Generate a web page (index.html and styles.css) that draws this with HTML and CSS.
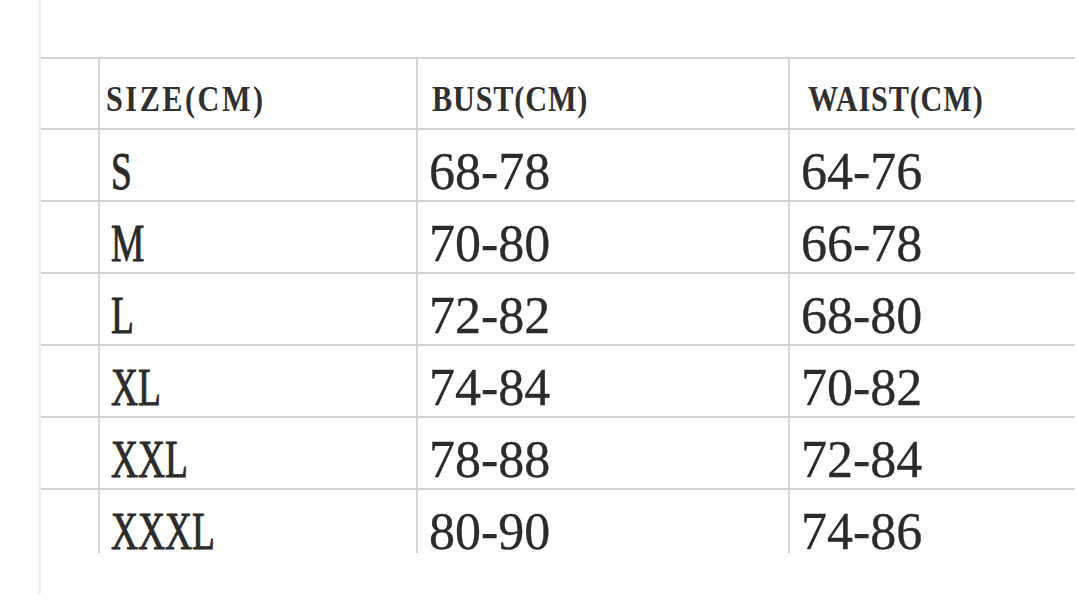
FILE: index.html
```html
<!DOCTYPE html>
<html lang="en">
<head>
<meta charset="utf-8">
<title>Size chart</title>
<link rel="stylesheet" href="styles.css">
</head>
<body>
<div class="sheet">
  <div class="grid">
    <div class="cell head idx"></div>
    <div class="cell head c1"><span class="ht wide">SIZE(CM)</span></div>
    <div class="cell head c2"><span class="ht">BUST(CM)</span></div>
    <div class="cell head c3"><span class="ht">WAIST(CM)</span></div>

    <div class="cell idx"></div>
    <div class="cell c1"><span class="sz">S</span></div>
    <div class="cell c2">68-78</div>
    <div class="cell c3">64-76</div>

    <div class="cell idx"></div>
    <div class="cell c1"><span class="sz">M</span></div>
    <div class="cell c2">70-80</div>
    <div class="cell c3">66-78</div>

    <div class="cell idx"></div>
    <div class="cell c1"><span class="sz">L</span></div>
    <div class="cell c2">72-82</div>
    <div class="cell c3">68-80</div>

    <div class="cell idx"></div>
    <div class="cell c1"><span class="sz">XL</span></div>
    <div class="cell c2">74-84</div>
    <div class="cell c3">70-82</div>

    <div class="cell idx"></div>
    <div class="cell c1"><span class="sz">XXL</span></div>
    <div class="cell c2">78-88</div>
    <div class="cell c3">72-84</div>

    <div class="cell idx last"></div>
    <div class="cell c1 last"><span class="sz">XXXL</span></div>
    <div class="cell c2 last">80-90</div>
    <div class="cell c3 last">74-86</div>
  </div>
</div>
</body>
</html>
```

FILE: styles.css
```css
html, body {
  margin: 0;
  padding: 0;
  background: #ffffff;
}

body {
  width: 1079px;
  height: 600px;
  overflow: hidden;
  font-family: "Liberation Serif", "Times New Roman", serif;
  color: #2b2b2b;
}

.sheet {
  margin-left: 38px;
  width: 1037px;
  height: 594px;
  border-left: 3px solid #efefef;
  padding-top: 57px;
  box-sizing: border-box;
}

.grid {
  display: grid;
  grid-template-columns: 57px 318px 372px 287px;
  grid-template-rows: 71px 72px 72px 72px 72px 72px 65px;
}

.cell {
  border-top: 2px solid #d3d3d3;
  box-sizing: border-box;
  font-size: 52px;
  line-height: 52px;
  padding-top: 16px;
  padding-left: 11px;
  white-space: nowrap;
  -webkit-text-stroke: 0.3px #2b2b2b;
}

.cell.c1,
.cell.c2,
.cell.c3 {
  border-left: 2px solid #d3d3d3;
}

.cell.head {
  font-size: 36px;
  line-height: 36px;
  font-weight: bold;
  padding-top: 22px;
  color: #303030;
  -webkit-text-stroke: 0;
}

.cell.head.c1 { padding-left: 6px; }
.cell.head.c2 { padding-left: 14px; }
.cell.head.c3 { padding-left: 18px; }

.ht {
  display: inline-block;
  transform: scaleX(0.84);
  transform-origin: left center;
  letter-spacing: 1px;
}

.ht.wide {
  letter-spacing: 3px;
}

.sz {
  display: inline-block;
  transform: scaleX(0.72);
  transform-origin: left center;
  -webkit-text-stroke: 1px #2b2b2b;
}
```
